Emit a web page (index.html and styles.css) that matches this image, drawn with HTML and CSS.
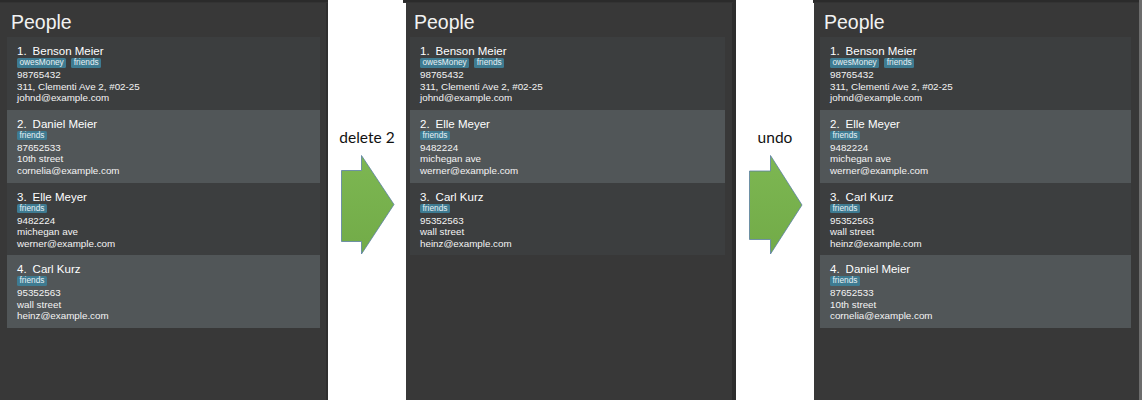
FILE: index.html
```html
<!DOCTYPE html>
<html lang="en">
<head>
<meta charset="utf-8">
<title>People - delete and undo</title>
<link rel="stylesheet" href="styles.css">
</head>
<body>
<main class="screen">
  <section class="panel panel--left">
    <div class="topbar"></div>
    <h1 class="title">People</h1>
    <ul class="list">
      <li class="card card--even">
        <div class="name"><span class="idx">1.</span><span>Benson Meier</span></div>
        <div class="tags"><span class="tag">owesMoney</span><span class="tag">friends</span></div>
        <div class="line">98765432</div>
        <div class="line">311, Clementi Ave 2, #02-25</div>
        <div class="line">johnd@example.com</div>
      </li>
      <li class="card card--odd">
        <div class="name"><span class="idx">2.</span><span>Daniel Meier</span></div>
        <div class="tags"><span class="tag">friends</span></div>
        <div class="line">87652533</div>
        <div class="line">10th street</div>
        <div class="line">cornelia@example.com</div>
      </li>
      <li class="card card--even">
        <div class="name"><span class="idx">3.</span><span>Elle Meyer</span></div>
        <div class="tags"><span class="tag">friends</span></div>
        <div class="line">9482224</div>
        <div class="line">michegan ave</div>
        <div class="line">werner@example.com</div>
      </li>
      <li class="card card--odd">
        <div class="name"><span class="idx">4.</span><span>Carl Kurz</span></div>
        <div class="tags"><span class="tag">friends</span></div>
        <div class="line">95352563</div>
        <div class="line">wall street</div>
        <div class="line">heinz@example.com</div>
      </li>
    </ul>
  </section>

  <div class="step">
    <div class="step-label">delete 2</div>
    <svg class="arrow" width="55" height="100" viewBox="0 0 55 100" aria-hidden="true">
      <defs>
        <linearGradient id="g1" x1="0" y1="0" x2="0" y2="1">
          <stop offset="0" stop-color="#7db752"/>
          <stop offset="1" stop-color="#72ab48"/>
        </linearGradient>
      </defs>
      <path d="M1.5 15.5 H21.5 V0.5 L54 49.5 L21.5 99 V86.5 H1.5 Z" fill="url(#g1)" stroke="#5a7fa3" stroke-width="0.8"/>
    </svg>
  </div>

  <section class="panel panel--mid">
    <div class="topbar"></div>
    <h1 class="title">People</h1>
    <ul class="list">
      <li class="card card--even">
        <div class="name"><span class="idx">1.</span><span>Benson Meier</span></div>
        <div class="tags"><span class="tag">owesMoney</span><span class="tag">friends</span></div>
        <div class="line">98765432</div>
        <div class="line">311, Clementi Ave 2, #02-25</div>
        <div class="line">johnd@example.com</div>
      </li>
      <li class="card card--odd">
        <div class="name"><span class="idx">2.</span><span>Elle Meyer</span></div>
        <div class="tags"><span class="tag">friends</span></div>
        <div class="line">9482224</div>
        <div class="line">michegan ave</div>
        <div class="line">werner@example.com</div>
      </li>
      <li class="card card--even">
        <div class="name"><span class="idx">3.</span><span>Carl Kurz</span></div>
        <div class="tags"><span class="tag">friends</span></div>
        <div class="line">95352563</div>
        <div class="line">wall street</div>
        <div class="line">heinz@example.com</div>
      </li>
    </ul>
  </section>

  <div class="step">
    <div class="step-label">undo</div>
    <svg class="arrow" width="55" height="100" viewBox="0 0 55 100" aria-hidden="true">
      <defs>
        <linearGradient id="g2" x1="0" y1="0" x2="0" y2="1">
          <stop offset="0" stop-color="#7db752"/>
          <stop offset="1" stop-color="#72ab48"/>
        </linearGradient>
      </defs>
      <path d="M1.5 16 H22.5 V0.5 L54 50 L22.5 99 V84.5 H1.5 Z" fill="url(#g2)" stroke="#5a7fa3" stroke-width="0.8"/>
    </svg>
  </div>

  <section class="panel panel--right">
    <div class="topbar"></div>
    <h1 class="title">People</h1>
    <ul class="list">
      <li class="card card--even">
        <div class="name"><span class="idx">1.</span><span>Benson Meier</span></div>
        <div class="tags"><span class="tag">owesMoney</span><span class="tag">friends</span></div>
        <div class="line">98765432</div>
        <div class="line">311, Clementi Ave 2, #02-25</div>
        <div class="line">johnd@example.com</div>
      </li>
      <li class="card card--odd">
        <div class="name"><span class="idx">2.</span><span>Elle Meyer</span></div>
        <div class="tags"><span class="tag">friends</span></div>
        <div class="line">9482224</div>
        <div class="line">michegan ave</div>
        <div class="line">werner@example.com</div>
      </li>
      <li class="card card--even">
        <div class="name"><span class="idx">3.</span><span>Carl Kurz</span></div>
        <div class="tags"><span class="tag">friends</span></div>
        <div class="line">95352563</div>
        <div class="line">wall street</div>
        <div class="line">heinz@example.com</div>
      </li>
      <li class="card card--odd">
        <div class="name"><span class="idx">4.</span><span>Daniel Meier</span></div>
        <div class="tags"><span class="tag">friends</span></div>
        <div class="line">87652533</div>
        <div class="line">10th street</div>
        <div class="line">cornelia@example.com</div>
      </li>
    </ul>
  </section>
</main>
</body>
</html>
```

FILE: styles.css
```css
* { box-sizing: border-box; }

html, body {
  margin: 0;
  padding: 0;
  background: #ffffff;
}

.screen {
  display: flex;
  width: 1142px;
  height: 400px;
  overflow: hidden;
  font-family: "Liberation Sans", Arial, sans-serif;
}

.panel {
  height: 400px;
  background: #383838;
  color: #ffffff;
  display: flex;
  flex-direction: column;
}

.panel--left {
  width: 328px;
  padding: 0 6px 0 7px;
  border-right: 2px solid #2f2f2f;
}

.panel--mid {
  width: 330px;
  padding: 0 7px 0 4px;
  border-right: 4px solid #2d2d2d;
}

.panel--right {
  width: 328px;
  padding: 0 8px 0 6px;
  border-right: 3px solid #6c6c6c;
}

.topbar {
  height: 3px;
  margin: 0 -8px 0 -7px;
  background: #2b2b2b;
  border-bottom: 1px solid #333333;
}

.title {
  margin: 9px 0 5px 4px;
  font-size: 19.5px;
  line-height: 20px;
  font-weight: normal;
  color: #f2f2f2;
}

.list {
  list-style: none;
  margin: 0;
  padding: 0;
}

.card {
  height: 72.8px;
  padding: 7px 10px 0 10px;
}

.card--even { background: #3c3e3f; }
.card--odd { background: #515658; }

.name {
  display: flex;
  gap: 6px;
  font-size: 11.5px;
  line-height: 14px;
  color: #ffffff;
}

.tags {
  display: flex;
  gap: 5px;
  height: 11px;
}

.tag {
  display: block;
  height: 9.5px;
  padding: 0 2.5px;
  font-size: 8.3px;
  line-height: 9.5px;
  color: #e8f0f4;
  background: #3e7b91;
  border-radius: 1.5px;
}

.line {
  font-size: 9.8px;
  line-height: 11.5px;
  color: #f4f4f4;
  white-space: nowrap;
}

.step {
  width: 78px;
  height: 400px;
  background: #ffffff;
  display: flex;
  flex-direction: column;
  align-items: center;
  padding-top: 127px;
}

.step-label {
  font-family: Lato, "Open Sans", sans-serif;
  font-size: 15.5px;
  line-height: 20px;
  color: #111111;
}

.arrow {
  display: block;
  margin-top: 8px;
}
```
